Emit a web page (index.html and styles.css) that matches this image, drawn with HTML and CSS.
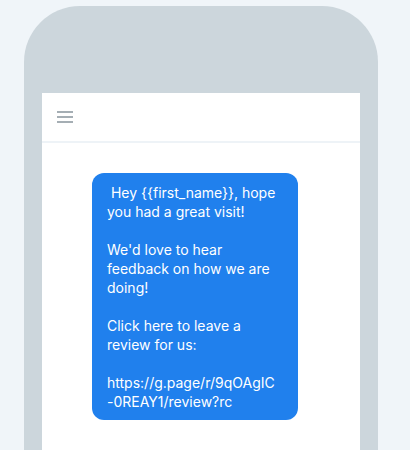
FILE: index.html
```html
<!DOCTYPE html>
<html>
<head>
<meta charset="utf-8">
<link rel="stylesheet" href="styles.css">
</head>
<body>
<div class="page">
  <div class="phone">
    <div class="screen">
      <div class="header">
        <svg class="menu" width="16" height="12" viewBox="0 0 16 12">
          <rect x="0" y="0" width="16" height="2" fill="#a5aeb4"/>
          <rect x="0" y="5" width="16" height="2" fill="#a5aeb4"/>
          <rect x="0" y="10" width="16" height="2" fill="#a5aeb4"/>
        </svg>
      </div>
      <div class="content">
        <div class="bubble"> Hey {{first_name}}, hope you had a great visit!

We'd love to hear feedback on how we are doing!

Click here to leave a review for us:

<span class="url">https://g.page/r/9qOAgIC-0REAY1/review?rc</span></div>
      </div>
    </div>
  </div>
</div>
</body>
</html>
```
FILE: styles.css
```css
html, body {
  margin: 0;
  padding: 0;
  background: #f0f5f9;
  overflow: hidden;
}
.page {
  width: 410px;
  height: 450px;
  padding-top: 6px;
  padding-left: 24px;
  box-sizing: border-box;
  overflow: hidden;
}
.phone {
  width: 354px;
  height: 444px;
  background: #ccd6dc;
  border-radius: 56px 56px 0 0;
  padding: 87px 18px 0 18px;
  box-sizing: border-box;
}
.screen {
  background: #ffffff;
  height: 100%;
}
.header {
  height: 48px;
  border-bottom: 2px solid #eef3f7;
  display: flex;
  align-items: center;
  padding-left: 15px;
}
.menu {
  display: block;
}
.content {
  padding-top: 30px;
  padding-left: 50px;
}
.bubble {
  width: 206px;
  box-sizing: border-box;
  background: #2080ed;
  color: #ffffff;
  border-radius: 12px;
  padding: 10px 18px 9px 15px;
  font-family: Inter, "Liberation Sans", sans-serif;
  font-size: 14px;
  line-height: 19px;
  white-space: pre-wrap;
}
.url {
  word-break: break-all;
  overflow-wrap: anywhere;
}
```
